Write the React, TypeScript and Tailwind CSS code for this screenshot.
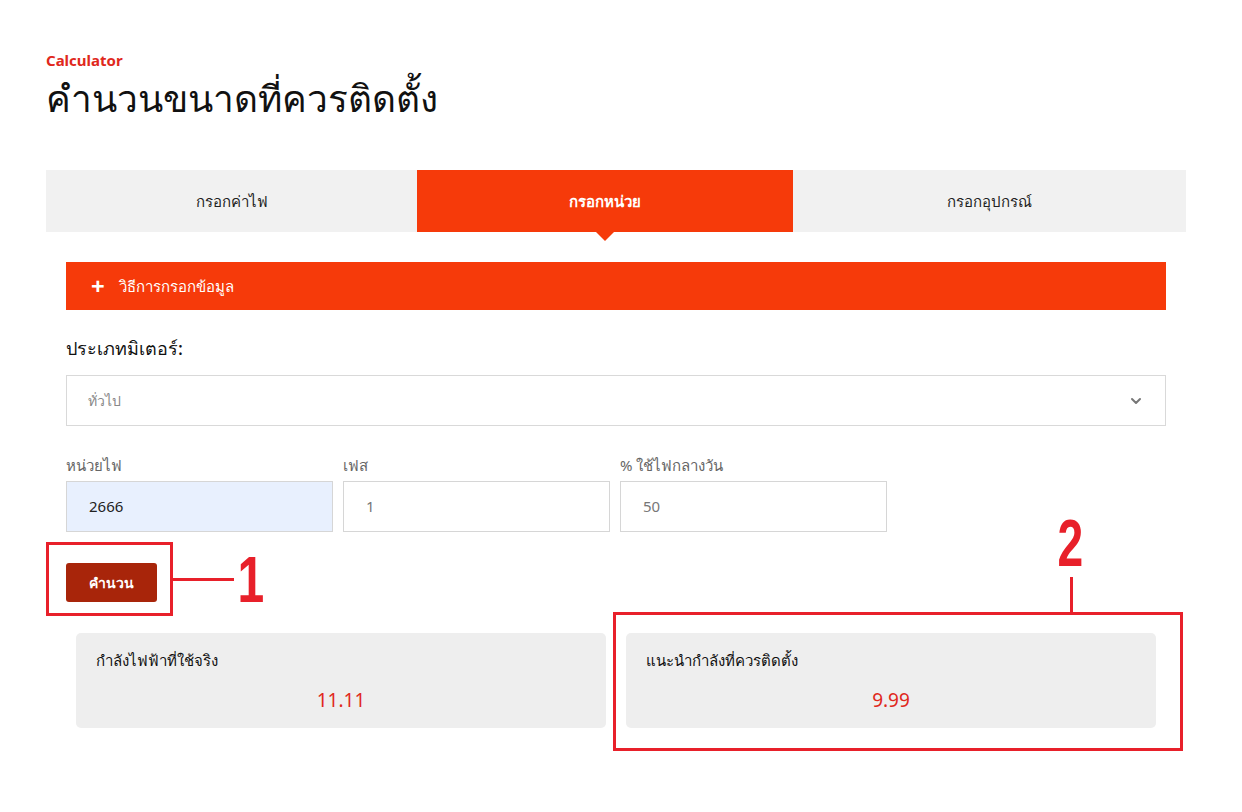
import { ChevronDown } from "lucide-react";

const tabs = ["กรอกค่าไฟ", "กรอกหน่วย", "กรอกอุปกรณ์"];

function Field({ label, value, highlight }: { label: string; value: string; highlight?: boolean }) {
  return (
    <div className="flex w-[267px] flex-col">
      <label className="mb-[6px] text-[15px] leading-5 text-[#666]">{label}</label>
      <div
        className={
          "flex h-[51px] items-center border border-[#d6d6d6] px-[22px] text-[15px] " +
          (highlight ? "bg-[#e8f0fe] text-[#222]" : "bg-white text-[#777]")
        }
      >
        {value}
      </div>
    </div>
  );
}

function ResultCard({ title, value }: { title: string; value: string }) {
  return (
    <div className="flex h-[95px] flex-1 flex-col rounded-[5px] bg-[#eeeeee] px-[20px] pt-[17px]">
      <div className="text-[15px] leading-5 text-[#111]">{title}</div>
      <div className="mt-[18px] text-center text-[19px] leading-6 text-[#e0281c]">{value}</div>
    </div>
  );
}

export default function App() {
  return (
    <div className="relative min-h-[812px] bg-white font-['Noto_Sans',sans-serif]">
      <div className="ml-[46px] w-[1140px] pt-[50px]">
        {/* หัวเรื่อง */}
        <div className="text-[15px] font-bold leading-5 text-[#e0281c]">Calculator</div>
        <h1 className="mt-[6px] text-[37px] font-medium leading-[44px] text-[#111]">คำนวนขนาดที่ควรติดตั้ง</h1>

        {/* แท็บ */}
        <div className="mt-[50px] flex h-[62px] bg-[#f1f1f1]">
          {tabs.map((t, i) => (
            <div
              key={t}
              className={
                "relative flex items-center justify-center text-[15px] " +
                (i === 0 ? "w-[371px] " : i === 1 ? "w-[376px] " : "flex-1 ") +
                (i === 1 ? "bg-[#f63a0a] font-semibold text-white" : "text-[#222]")
              }
            >
              {t}
              {i === 1 && (
                <span className="absolute left-1/2 top-full -translate-x-1/2 border-x-[9px] border-t-[9px] border-x-transparent border-t-[#f63a0a]" />
              )}
            </div>
          ))}
        </div>

        <div className="px-[20px]">
          {/* วิธีการกรอก */}
          <div className="mt-[30px] flex h-[48px] items-center bg-[#f63a0a] px-[25px] text-[15px] text-white">
            <span className="mr-[14px] text-[24px] font-bold leading-none">+</span>
            วิธีการกรอกข้อมูล
          </div>

          <div className="mt-[26px] text-[18px] font-medium leading-6 text-[#111]">ประเภทมิเตอร์:</div>
          <div className="mt-[15px] flex h-[51px] items-center justify-between border border-[#d9d9d9] px-[21px] text-[14px] text-[#888]">
            ทั่วไป
            <ChevronDown className="h-4 w-4 text-[#777]" strokeWidth={3} />
          </div>

          <div className="mt-[29px] flex gap-[10px]">
            <Field label="หน่วยไฟ" value="2666" highlight />
            <Field label="เฟส" value="1" />
            <Field label="% ใช้ไฟกลางวัน" value="50" />
          </div>

          <button className="mt-[31px] h-[39px] w-[91px] rounded-[3px] bg-[#a8250a] text-[14px] font-bold text-white">
            คำนวน
          </button>

          <div className="mt-[31px] flex gap-[20px] px-[10px]">
            <ResultCard title="กำลังไฟฟ้าที่ใช้จริง" value="11.11" />
            <ResultCard title="แนะนำกำลังที่ควรติดตั้ง" value="9.99" />
          </div>
        </div>
      </div>

      {/* คำอธิบายประกอบ */}
      <div className="absolute left-[46px] top-[542px] h-[74px] w-[127px] border-[3px] border-[#e8202a]" />
      <div className="absolute left-[172px] top-[578px] h-[3px] w-[62px] bg-[#e8202a]" />
      <div className="absolute left-[233px] top-[544px] font-['Liberation_Sans_Narrow','Liberation_Sans',sans-serif] text-[64px] font-bold leading-[72px] text-[#e8202a] [transform:scaleX(0.75)]">
        1
      </div>
      <div className="absolute left-[613px] top-[612px] h-[139px] w-[570px] border-[3px] border-[#e8202a]" />
      <div className="absolute left-[1070px] top-[577px] h-[36px] w-[3px] bg-[#e8202a]" />
      <div className="absolute left-[1052px] top-[505px] font-['Liberation_Sans_Narrow','Liberation_Sans',sans-serif] text-[66px] font-bold leading-[76px] text-[#e8202a] [transform:scaleX(0.7)]">
        2
      </div>
    </div>
  );
}
